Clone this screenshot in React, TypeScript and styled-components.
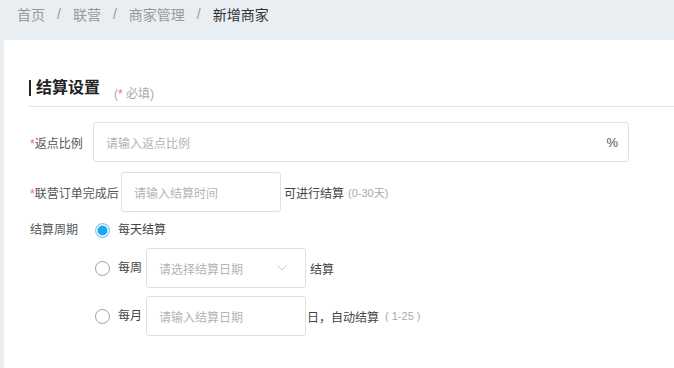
import styled, { createGlobalStyle } from 'styled-components';

const GlobalStyle = createGlobalStyle`
  html, body {
    margin: 0;
    padding: 0;
    background: #e9eef3;
    font-family: "Liberation Sans", "Noto Sans CJK SC", sans-serif;
  }
`;

const CRUMBS = ['首页', '联营', '商家管理', '新增商家'];

export default function App() {
  return (
    <Page>
      <GlobalStyle />
      <Breadcrumb>
        {CRUMBS.map((c, i) => (
          <Crumb key={c} $current={i === CRUMBS.length - 1}>
            {c}
            {i < CRUMBS.length - 1 && <Sep>/</Sep>}
          </Crumb>
        ))}
      </Breadcrumb>
      <Panel>
        <SectionHead>
          <Title>结算设置</Title>
          <Hint>
            (<Star>*</Star> 必填)
          </Hint>
        </SectionHead>

        <Row>
          <Label $width={64}>
            <Star>*</Star>返点比例
          </Label>
          <InputBox $width={536}>
            <Placeholder>请输入返点比例</Placeholder>
            <Suffix>%</Suffix>
          </InputBox>
        </Row>

        <Row $top={10}>
          <Label $width={92}>
            <Star>*</Star>联营订单完成后
          </Label>
          <InputBox $width={160}>
            <Placeholder>请输入结算时间</Placeholder>
          </InputBox>
          <After>可进行结算</After>
          <Note>(0-30天)</Note>
        </Row>

        <CycleRow>
          <Label $width={66}>结算周期</Label>
          <Options>
            <Option $height={16}>
              <Radio $checked />
              <OptionText>每天结算</OptionText>
            </Option>
            <Option $height={40} $top={10}>
              <Radio />
              <OptionText>每周</OptionText>
              <InputBox $width={160}>
                <Placeholder>请选择结算日期</Placeholder>
                <Chevron viewBox="0 0 10 6" width="10" height="6">
                  <path d="M0.5 0.5 L5 5 L9.5 0.5" fill="none" stroke="#c8cacf" strokeWidth="1" />
                </Chevron>
              </InputBox>
              <After $gap={4}>结算</After>
            </Option>
            <Option $height={40} $top={8}>
              <Radio />
              <OptionText>每月</OptionText>
              <InputBox $width={160}>
                <Placeholder>请输入结算日期</Placeholder>
              </InputBox>
              <After $gap={1}>日，自动结算</After>
              <Note $gap={6}>( 1-25 )</Note>
            </Option>
          </Options>
        </CycleRow>
      </Panel>
    </Page>
  );
}

const Page = styled.div`
  width: 674px;
  height: 368px;
  display: flex;
  flex-direction: column;
  overflow: hidden;
`;

const Breadcrumb = styled.nav`
  height: 40px;
  flex-shrink: 0;
  display: flex;
  align-items: center;
  padding-left: 17px;
  padding-bottom: 13px;
  box-sizing: border-box;
  font-size: 14px;
`;

const Crumb = styled.span<{ $current?: boolean }>`
  color: ${(p) => (p.$current ? '#333' : '#999')};
  display: inline-flex;
  align-items: center;
`;

const Sep = styled.span`
  color: #999;
  margin: 0 12px 0 12px;
`;

const Panel = styled.main`
  flex: 1;
  margin-left: 4px;
  background: #fff;
  padding: 40px 0 0 25px;
`;

const SectionHead = styled.div`
  display: flex;
  align-items: flex-end;
  height: 27px;
  border-bottom: 1px solid #e4e4e4;
  box-sizing: border-box;
`;

const Title = styled.h2`
  margin: 0 0 10px;
  font-size: 16px;
  font-weight: 600;
  color: #222;
  line-height: 16px;
  border-left: 2px solid #222;
  padding-left: 5px;
`;

const Hint = styled.span`
  font-size: 12px;
  color: #aaa;
  margin-left: 14px;
  margin-bottom: 4px;
  line-height: 16px;
`;

const Star = styled.span`
  color: #f56c6c;
`;

const Row = styled.div<{ $top?: number }>`
  display: flex;
  align-items: center;
  margin-top: ${(p) => p.$top ?? 15}px;
  font-size: 12px;
`;

const Label = styled.label<{ $width: number }>`
  width: ${(p) => p.$width}px;
  flex-shrink: 0;
  color: #555;
  font-size: 12px;
  padding-left: 1px;
  box-sizing: border-box;
`;

const InputBox = styled.div<{ $width: number }>`
  width: ${(p) => p.$width}px;
  height: 40px;
  box-sizing: border-box;
  border: 1px solid #e0e0e0;
  border-radius: 3px;
  display: flex;
  align-items: center;
  padding: 0 12px;
  flex-shrink: 0;
`;

const Placeholder = styled.span`
  flex: 1;
  color: #b4b4b4;
  font-size: 12px;
`;

const Suffix = styled.span`
  color: #555;
  font-size: 13px;
  margin-right: -2px;
`;

const Chevron = styled.svg`
  margin-right: 6px;
`;

const After = styled.span<{ $gap?: number }>`
  color: #444;
  font-size: 12px;
  margin-left: ${(p) => p.$gap ?? 3}px;
`;

const Note = styled.span<{ $gap?: number }>`
  color: #aaa;
  font-size: 11px;
  margin-left: ${(p) => p.$gap ?? 4}px;
`;

const CycleRow = styled.div`
  display: flex;
  align-items: flex-start;
  margin-top: 10px;
  font-size: 12px;

  & > label {
    line-height: 16px;
  }
`;

const Options = styled.div`
  display: flex;
  flex-direction: column;
`;

const Option = styled.div<{ $height: number; $top?: number }>`
  display: flex;
  align-items: center;
  height: ${(p) => p.$height}px;
  margin-top: ${(p) => p.$top ?? 0}px;
`;

const Radio = styled.span<{ $checked?: boolean }>`
  width: 15px;
  height: 15px;
  box-sizing: border-box;
  border-radius: 50%;
  flex-shrink: 0;
  border: 1px solid ${(p) => (p.$checked ? '#8fd0f5' : '#9aa0a8')};
  background: ${(p) => (p.$checked ? '#1fa7ea' : '#fff')};
  box-shadow: ${(p) => (p.$checked ? 'inset 0 0 0 1.5px #fff' : 'none')};
`;

const OptionText = styled.span`
  color: #444;
  font-size: 12px;
  margin-left: 8px;
  margin-right: 4px;
  line-height: 16px;
`;
